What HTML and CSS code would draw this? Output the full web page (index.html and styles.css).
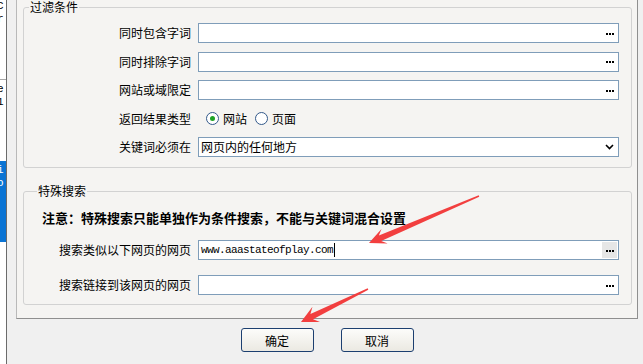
FILE: index.html
```html
<!DOCTYPE html>
<html lang="zh-CN">
<head>
  <meta charset="UTF-8" />
  <title>高级搜索</title>
  <link rel="stylesheet" href="styles.css">
</head>
<body>
  <div class="screen">
    <div class="side">
      <div class="side-top"><span>C</span><span>r</span></div>
      <div class="side-mid"><span>e</span><span>1</span></div>
      <div class="side-sel"><span>i</span><span>o</span></div>
    </div>

    <div class="main">
      <div class="panel">
        <fieldset class="group">
          <legend>过滤条件</legend>
          <div class="rows">
            <label>同时包含字词</label>
            <div class="field"><span class="value"></span><span class="more"><i></i><i></i><i></i></span></div>

            <label>同时排除字词</label>
            <div class="field"><span class="value"></span><span class="more"><i></i><i></i><i></i></span></div>

            <label>网站或域限定</label>
            <div class="field"><span class="value"></span><span class="more"><i></i><i></i><i></i></span></div>

            <label>返回结果类型</label>
            <div class="radios">
              <span class="radio checked"></span><span>网站</span>
              <span class="radio"></span><span>页面</span>
            </div>

            <label>关键词必须在</label>
            <div class="field select">
              <span class="value">网页内的任何地方</span>
              <svg class="chevron" width="9" height="6" viewBox="0 0 9 6"><polyline points="1,1 4.5,4.5 8,1" fill="none" stroke="#000" stroke-width="1.6"/></svg>
            </div>
          </div>
        </fieldset>

        <fieldset class="group special">
          <legend>特殊搜索</legend>
          <p class="note">注意：特殊搜索只能单独作为条件搜索，不能与关键词混合设置</p>
          <div class="rows wide">
            <label>搜索类似以下网页的网页</label>
            <div class="field"><span class="value mono">www.aaastateofplay.com<b class="caret"></b></span><span class="more hover"><i></i><i></i><i></i></span></div>

            <label>搜索链接到该网页的网页</label>
            <div class="field"><span class="value"></span><span class="more"><i></i><i></i><i></i></span></div>
          </div>
        </fieldset>
      </div>

      <div class="actions">
        <button>确定</button>
        <button>取消</button>
      </div>
    </div>

    <!-- red annotation arrows drawn over the dialog -->
    <svg class="marks" width="643" height="364">
      <g transform="translate(479 196) rotate(156.9)">
        <polygon points="0,-0.7 107.6,-3 102.6,-8 119.6,0 102.6,8 107.6,3 0,0.7" />
      </g>
      <g transform="translate(368 289) rotate(153.8)">
        <polygon points="0,-0.7 62.7,-3 57.7,-8.5 74.7,0 57.7,8.5 62.7,3 0,0.7" />
      </g>
    </svg>
  </div>
</body>
</html>
```

FILE: styles.css
```css
body {
  margin: 0;
  background: #f0f0f0;
  font-family: "Noto Sans CJK SC", sans-serif;
  font-size: 12px;
  color: #000;
}

.screen {
  position: relative;
  display: flex;
  height: 364px;
  overflow: hidden;
}

/* the window behind, cut off on the left */
.side {
  width: 6px;
  flex-shrink: 0;
  border-right: 1px solid #6b6b6b;
  background: #fff;
  display: flex;
  flex-direction: column;
  overflow: hidden;
  font-family: "Liberation Mono", monospace;
  font-size: 11px;
  line-height: 11px;
}

.side span {
  display: block;
  margin: 0 0 2px -3px;
}

.side-top {
  height: 80px;
  padding-top: 1px;
  box-sizing: border-box;
  border-bottom: 1px solid #a8a8a8;
}

.side-mid {
  height: 81px;
  padding-top: 4px;
  box-sizing: border-box;
}

.side-sel {
  height: 81px;
  padding-top: 4px;
  box-sizing: border-box;
  background: #0a74d4;
  color: #fff;
}

.main {
  margin-left: 9px;
  width: 622px;
}

.panel {
  background: #f5f4f2;
  border-left: 1px solid #b9b9b9;
  border-right: 1px solid #8f8f8f;
  border-bottom: 1px solid #8f8f8f;
  padding-bottom: 13px;
}

.group {
  margin: 0 5px 0 6px;
  padding: 9px 12px 10px 10px;
  border: 1px solid #d2d2d2;
  border-radius: 3px;
  min-width: 0;
}

.group legend {
  margin-left: -5px;
  padding: 0 1px;
  line-height: 14px;
}

.special {
  margin-top: 16px;
  padding: 13px 12px 9px 18px;
}

.note {
  margin: 0 0 15px;
  font-weight: bold;
  font-size: 13px;
  line-height: 14px;
}

.rows {
  display: grid;
  grid-template-columns: 1fr 421px;
  column-gap: 7px;
  row-gap: 8.5px;
  align-items: center;
}

.rows.wide {
  row-gap: 15px;
}

.rows label {
  text-align: right;
  line-height: 14px;
}

.field {
  height: 20px;
  box-sizing: border-box;
  border: 1px solid #7f9db9;
  background: #fff;
  display: flex;
  align-items: center;
  padding-left: 2px;
}

.field .value {
  flex: 1;
  display: flex;
  align-items: center;
  line-height: 14px;
}

.mono {
  font-family: "Liberation Mono", monospace;
  font-size: 11px;
  letter-spacing: -0.6px;
}

.caret {
  display: inline-block;
  width: 1px;
  height: 14px;
  background: #000;
  margin-left: 1px;
}

.more {
  width: 15px;
  height: 16px;
  margin-right: 1px;
  display: flex;
  justify-content: center;
  align-items: center;
  gap: 1px;
  padding-top: 1px;
  box-sizing: border-box;
}

.more.hover {
  background: #e6e6e6;
}

.more i {
  width: 2px;
  height: 2px;
  background: #000;
}

.select .chevron {
  margin-right: 4px;
}

.radios {
  height: 20px;
  display: flex;
  align-items: center;
  line-height: 14px;
}

.radio {
  width: 13px;
  height: 13px;
  box-sizing: border-box;
  border: 1px solid #33598a;
  border-radius: 50%;
  background: #fff;
  display: flex;
  justify-content: center;
  align-items: center;
  margin: 0 4px 0 8px;
}

.radio.checked::after {
  content: "";
  width: 5px;
  height: 5px;
  border-radius: 50%;
  background: #1fa326;
}

.actions {
  display: flex;
  justify-content: center;
  gap: 27px;
  padding-top: 9px;
}

.actions button {
  width: 73px;
  height: 24px;
  border: 1px solid #1c3f70;
  border-radius: 3px;
  background: linear-gradient(#fcfcfa, #ebe9e2);
  font-family: "Noto Sans CJK SC", sans-serif;
  font-size: 12px;
  color: #000;
  padding: 0;
}

.marks {
  position: absolute;
  top: 0;
  left: 0;
  pointer-events: none;
  fill: #f23f3f;
}
```
